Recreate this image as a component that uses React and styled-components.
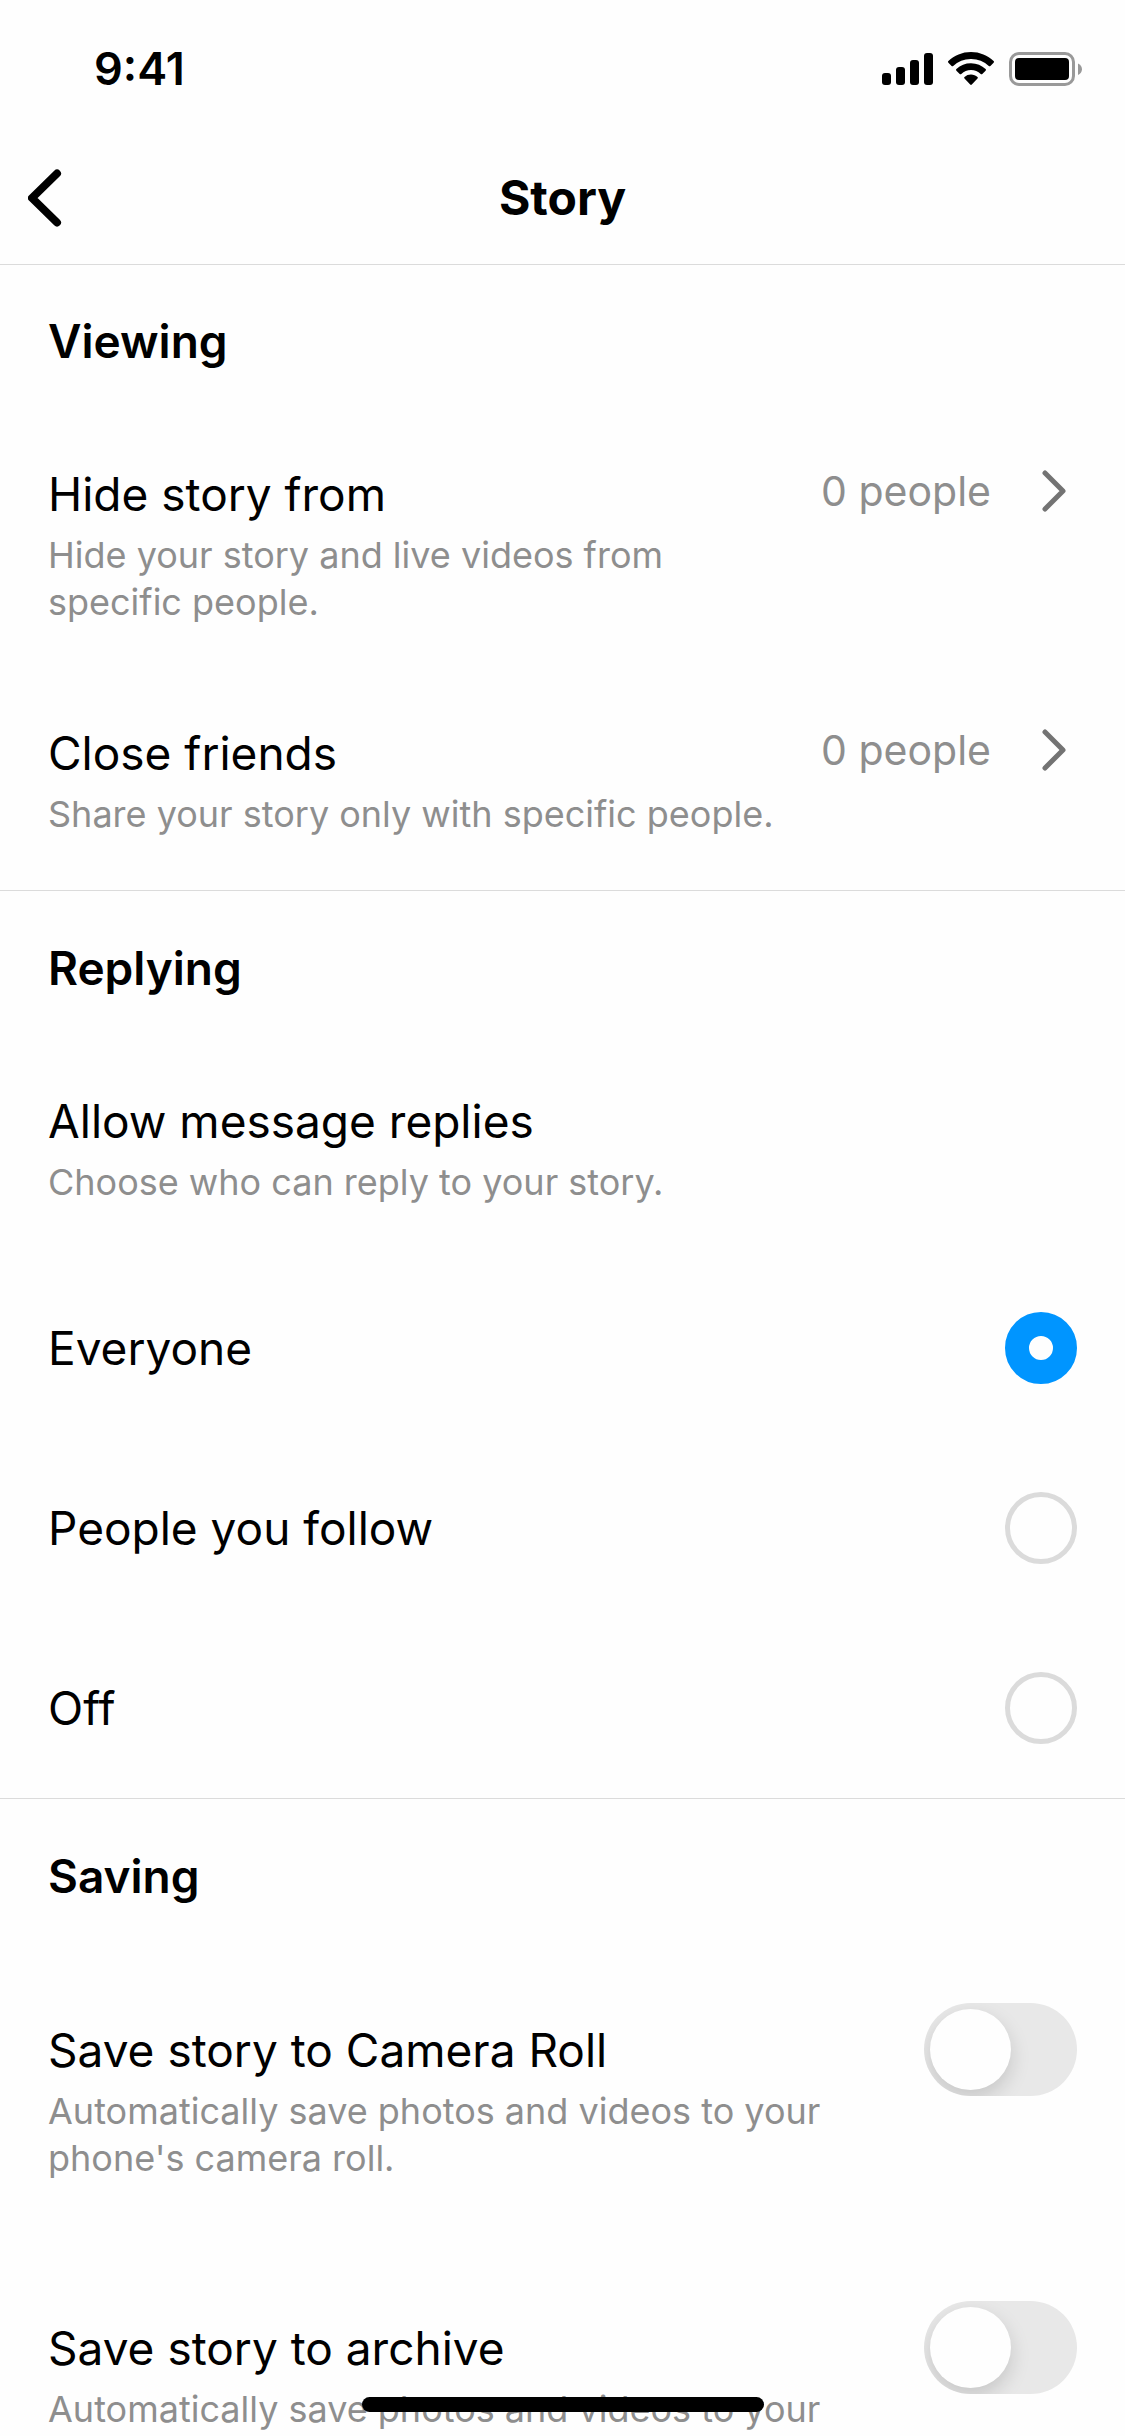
import React, { useState } from 'react';
import styled, { createGlobalStyle } from 'styled-components';

const COLORS = {
  text: '#000',
  secondary: '#8e8e8e',
  chevron: '#737373',
  line: '#dbdbdb',
  track: '#e8e8e8',
  primary: '#0095ff',
  background: '#fefefe',
};

const REPLY_OPTIONS = ['Everyone', 'People you follow', 'Off'];

const App = () => {
  const [replies, setReplies] = useState('Everyone');

  return (
    <Screen>
      <GlobalStyle />
      <StatusBar>
        <Time>9:41</Time>
        <StatusIcons />
      </StatusBar>
      <NavBar>
        <BackButton type="button" aria-label="Back">
          <svg width="36" height="60" viewBox="0 0 36 60" fill="none">
            <path
              d="M29 5.5L4 30L29 54.5"
              stroke={COLORS.text}
              strokeWidth="8"
              strokeLinecap="round"
              strokeLinejoin="round"
            />
          </svg>
        </BackButton>
        <NavTitle>Story</NavTitle>
      </NavBar>

      <Content>
        <Section>
          <SectionTitle>Viewing</SectionTitle>
          <LinkRow
            title="Hide story from"
            description="Hide your story and live videos from specific people."
            value="0 people"
          />
          <LinkRow
            title="Close friends"
            description="Share your story only with specific people."
            value="0 people"
          />
        </Section>

        <Section>
          <SectionTitle>Replying</SectionTitle>
          <RadioGroup>
            <Legend>
              <RowTitle>Allow message replies</RowTitle>
              <Description>Choose who can reply to your story.</Description>
            </Legend>
            {REPLY_OPTIONS.map((option) => (
              <RadioRow key={option}>
                <RowTitle>{option}</RowTitle>
                <Radio
                  type="radio"
                  name="replies"
                  checked={replies === option}
                  onChange={() => setReplies(option)}
                />
              </RadioRow>
            ))}
          </RadioGroup>
        </Section>

        <Section>
          <SectionTitle>Saving</SectionTitle>
          <SwitchRow
            title="Save story to Camera Roll"
            description="Automatically save photos and videos to your phone's camera roll."
          />
          <SwitchRow
            title="Save story to archive"
            description="Automatically save photos and videos to your"
          />
        </Section>
      </Content>
      <HomeIndicator />
    </Screen>
  );
};

const StatusIcons = () => (
  <IconGroup>
    <svg width="51" height="34" viewBox="0 0 51 34">
      <rect x="0" y="21" width="9" height="12" rx="3" />
      <rect x="14" y="15" width="9" height="18" rx="3" />
      <rect x="28" y="8" width="9" height="25" rx="3" />
      <rect x="42" y="1" width="9" height="32" rx="3" />
    </svg>
    <svg width="46" height="34" viewBox="0 0 46 34">
      <path d="M23 0C31.800 0 39.800 3.400 45.600 9.100a1.100 1.100 0 0 1 0 1.600L42.400 13.900a1.200 1.200 0 0 1-1.600 0A25.500 25.500 0 0 0 23 6.900 25.500 25.500 0 0 0 5.200 13.900a1.200 1.200 0 0 1-1.600 0L.4 10.700a1.100 1.100 0 0 1 0-1.600C6.200 3.400 14.200 0 23 0Z" />
      <path d="M23 11.200c5.700 0 10.800 2.200 14.600 5.900a1.100 1.100 0 0 1 0 1.600l-3.300 3.300a1.200 1.200 0 0 1-1.600 0A14 14 0 0 0 23 18.100a14 14 0 0 0-9.700 3.900 1.200 1.200 0 0 1-1.600 0l-3.300-3.300a1.100 1.100 0 0 1 0-1.600A20.900 20.900 0 0 1 23 11.200Z" />
      <path d="M23 22.600c2.500 0 4.800.9 6.500 2.400a1.100 1.100 0 0 1 0 1.600l-5.700 5.900a1.100 1.100 0 0 1-1.600 0l-5.700-5.900a1.100 1.100 0 0 1 0-1.600A9.800 9.800 0 0 1 23 22.600Z" />
    </svg>
    <svg width="74" height="34" viewBox="0 0 74 34">
      <rect x="1.500" y="1.500" width="63" height="31" rx="8.500" fill="none" stroke="#999" strokeWidth="3" />
      <rect x="6" y="6" width="54" height="22" rx="4" />
      <path d="M69 11.500c2.400 1 4 3.200 4 5.800s-1.600 4.800-4 5.800Z" fill="#999" />
    </svg>
  </IconGroup>
);

const LinkRow = ({ title, description, value }) => (
  <LinkButton type="button">
    <RowText>
      <RowTitle>{title}</RowTitle>
      <Description>{description}</Description>
    </RowText>
    <Trailing>
      {value}
      <svg width="48" height="48" viewBox="0 0 48 48" fill="none">
        <path
          d="M16 6L34 24L16 42"
          stroke={COLORS.chevron}
          strokeWidth="5"
          strokeLinecap="round"
          strokeLinejoin="round"
        />
      </svg>
    </Trailing>
  </LinkButton>
);

const SwitchRow = ({ title, description }) => {
  const [on, setOn] = useState(false);

  return (
    <SwitchLabel>
      <SwitchText>
        <RowTitle>{title}</RowTitle>
        <Description>{description}</Description>
      </SwitchText>
      <Switch
        type="checkbox"
        role="switch"
        checked={on}
        onChange={() => setOn(!on)}
      />
    </SwitchLabel>
  );
};

const GlobalStyle = createGlobalStyle`
  *, *::before, *::after {
    box-sizing: border-box;
  }

  body {
    margin: 0;
    background: ${COLORS.background};
    color: ${COLORS.text};
    font-family: Inter, 'Liberation Sans', sans-serif;
  }

  button {
    border: none;
    background: none;
    color: inherit;
    font: inherit;
    text-align: left;
    cursor: pointer;
  }

  svg {
    display: block;
    flex: none;
  }
`;

const Screen = styled.div`
  position: relative;
  display: flex;
  flex-direction: column;
  height: 100vh;
  overflow: hidden;
`;

const StatusBar = styled.div`
  display: flex;
  align-items: center;
  justify-content: space-between;
  padding: 42px 42px 36px 94px;
`;

const Time = styled.span`
  font-size: 45px;
  font-weight: 600;
  line-height: 54px;
`;

const IconGroup = styled.div`
  display: flex;
  align-items: center;
  gap: 15px;
`;

const NavBar = styled.header`
  display: grid;
  grid-template-columns: 1fr auto 1fr;
  align-items: center;
  padding: 36px 28px;
  box-shadow: 0 1px ${COLORS.line};
`;

const BackButton = styled.button`
  justify-self: start;
  padding: 0;
`;

const NavTitle = styled.h1`
  margin: 0;
  font-size: 48px;
  font-weight: 700;
  line-height: 60px;
`;

const Content = styled.main`
  flex: 1;
  min-height: 0;
  overflow-y: auto;
  scrollbar-width: none;
`;

const Section = styled.section`
  padding-top: 47px;

  & + & {
    border-top: 1px solid ${COLORS.line};
  }
`;

const SectionTitle = styled.h2`
  margin: 0;
  padding: 0 48px 48px;
  font-size: 46px;
  font-weight: 600;
  line-height: 60px;
`;

const RowTitle = styled.span`
  display: block;
  font-size: 46px;
  line-height: 60px;
`;

const Description = styled.span`
  display: block;
  margin-top: 8px;
  color: ${COLORS.secondary};
  font-size: 36px;
  line-height: 47px;
`;

const LinkButton = styled.button`
  display: flex;
  align-items: flex-start;
  gap: 40px;
  width: 100%;
  padding: 45px 48px 52px;
`;

const RowText = styled.span`
  flex: 1;
`;

const Trailing = styled.span`
  display: flex;
  align-items: center;
  gap: 38px;
  color: ${COLORS.secondary};
  font-size: 41px;
  line-height: 54px;
`;

const RadioGroup = styled.fieldset`
  margin: 0;
  padding: 0;
  border: none;
`;

const Legend = styled.legend`
  padding: 45px 48px 52px;
`;

const RadioRow = styled.label`
  display: flex;
  align-items: center;
  justify-content: space-between;
  padding: 54px 48px;
  cursor: pointer;
`;

const Radio = styled.input`
  appearance: none;
  width: 72px;
  height: 72px;
  margin: 0;
  border: 5px solid ${COLORS.line};
  border-radius: 50%;

  &:checked {
    border: 24px solid ${COLORS.primary};
  }
`;

const SwitchLabel = styled.label`
  display: flex;
  align-items: flex-start;
  gap: 40px;
  padding: 49px 48px 70px;
  cursor: pointer;
`;

/* Lines the title up with the middle of the switch */
const SwitchText = styled(RowText)`
  padding-top: 17px;
`;

const Switch = styled.input`
  appearance: none;
  flex: none;
  width: 153px;
  height: 93px;
  margin: 0;
  padding: 6px;
  border-radius: 47px;
  background: ${COLORS.track};
  overflow: hidden;

  &::before {
    content: '';
    display: block;
    width: 81px;
    height: 81px;
    border-radius: 50%;
    background: ${COLORS.background};
    box-shadow: 0 8px 20px rgba(0, 0, 0, 0.15);
  }

  &:checked {
    background: ${COLORS.primary};
  }

  &:checked::before {
    margin-left: auto;
  }
`;

const HomeIndicator = styled.div`
  position: absolute;
  bottom: 24px;
  left: 50%;
  width: 402px;
  height: 15px;
  border-radius: 8px;
  background: ${COLORS.text};
  transform: translateX(-50%);
`;

export default App;
